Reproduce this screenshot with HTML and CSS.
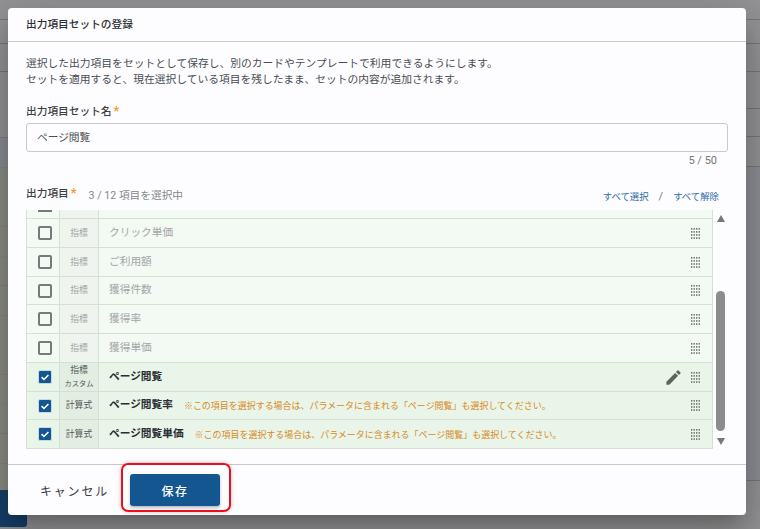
FILE: index.html
```html
<!DOCTYPE html>
<html lang="ja">
<head>
  <meta charset="UTF-8" />
  <meta name="viewport" content="width=device-width, initial-scale=1.0"/>
  <title>出力項目セットの登録</title>
  <link rel="stylesheet" href="styles.css">
</head>
<body>
  <div class="backdrop">
    <div class="bg-left"></div>
    <div class="bg-right"></div>
    <div class="bg-button"></div>
  </div>

  <div class="dialog">
    <div class="dialog-title">出力項目セットの登録</div>

    <div class="dialog-body">
      <p class="intro">選択した出力項目をセットとして保存し、別のカードやテンプレートで利用できるようにします。<br>セットを適用すると、現在選択している項目を残したまま、セットの内容が追加されます。</p>

      <label class="field-label">出力項目セット名<span class="req">*</span></label>
      <div class="text-input">ページ閲覧</div>
      <div class="counter">5 / 50</div>

      <div class="list-head">
        <label class="field-label">出力項目<span class="req">*</span></label>
        <span class="selected-count">3 / 12 項目を選択中</span>
        <span class="list-actions"><a>すべて選択</a><span class="slash">/</span><a>すべて解除</a></span>
      </div>

      <div class="list-wrap">
        <div class="list">
          <div class="row row-cut">
            <span class="check-cell"><span class="box"></span></span>
            <span class="type-cell"></span>
            <span class="name-cell"></span>
          </div>
          <div class="row">
            <span class="check-cell"><span class="box"></span></span>
            <span class="type-cell">指標</span>
            <span class="name-cell">クリック単価</span>
            <svg class="grip" viewBox="0 0 10 10" preserveAspectRatio="none"><use href="#dots"/></svg>
          </div>
          <div class="row">
            <span class="check-cell"><span class="box"></span></span>
            <span class="type-cell">指標</span>
            <span class="name-cell">ご利用額</span>
            <svg class="grip" viewBox="0 0 10 10" preserveAspectRatio="none"><use href="#dots"/></svg>
          </div>
          <div class="row short">
            <span class="check-cell"><span class="box"></span></span>
            <span class="type-cell">指標</span>
            <span class="name-cell">獲得件数</span>
            <svg class="grip" viewBox="0 0 10 10" preserveAspectRatio="none"><use href="#dots"/></svg>
          </div>
          <div class="row">
            <span class="check-cell"><span class="box"></span></span>
            <span class="type-cell">指標</span>
            <span class="name-cell">獲得率</span>
            <svg class="grip" viewBox="0 0 10 10" preserveAspectRatio="none"><use href="#dots"/></svg>
          </div>
          <div class="row">
            <span class="check-cell"><span class="box"></span></span>
            <span class="type-cell">指標</span>
            <span class="name-cell">獲得単価</span>
            <svg class="grip" viewBox="0 0 10 10" preserveAspectRatio="none"><use href="#dots"/></svg>
          </div>
          <div class="row on">
            <span class="check-cell"><span class="box"><svg viewBox="0 0 14 14"><path d="M3 7.2l2.8 2.7L11 4.6"/></svg></span></span>
            <span class="type-cell type-two">指標<small>カスタム</small></span>
            <span class="name-cell">ページ閲覧</span>
            <svg class="pencil" viewBox="0 0 24 24"><path d="M3 17.25V21h3.75L17.81 9.94l-3.75-3.75L3 17.25zM20.71 7.04a1 1 0 0 0 0-1.41l-2.34-2.34a1 1 0 0 0-1.41 0l-1.83 1.83 3.75 3.75 1.83-1.83z"/></svg>
            <svg class="grip" viewBox="0 0 10 10" preserveAspectRatio="none"><use href="#dots"/></svg>
          </div>
          <div class="row on short">
            <span class="check-cell"><span class="box"><svg viewBox="0 0 14 14"><path d="M3 7.2l2.8 2.7L11 4.6"/></svg></span></span>
            <span class="type-cell">計算式</span>
            <span class="name-cell">ページ閲覧率<em>※この項目を選択する場合は、パラメータに含まれる「ページ閲覧」も選択してください。</em></span>
            <svg class="grip" viewBox="0 0 10 10" preserveAspectRatio="none"><use href="#dots"/></svg>
          </div>
          <div class="row on">
            <span class="check-cell"><span class="box"><svg viewBox="0 0 14 14"><path d="M3 7.2l2.8 2.7L11 4.6"/></svg></span></span>
            <span class="type-cell">計算式</span>
            <span class="name-cell">ページ閲覧単価<em>※この項目を選択する場合は、パラメータに含まれる「ページ閲覧」も選択してください。</em></span>
            <svg class="grip" viewBox="0 0 10 10" preserveAspectRatio="none"><use href="#dots"/></svg>
          </div>
        </div>

        <div class="scrollbar">
          <span class="arrow-up"></span>
          <span class="track"><span class="thumb"></span></span>
          <span class="arrow-down"></span>
        </div>
      </div>
    </div>

    <div class="dialog-actions">
      <button class="btn-cancel">キャンセル</button>
      <span class="save-wrap">
        <button class="btn-save">保存</button>
        <span class="save-ring"></span>
      </span>
    </div>
  </div>

  <svg class="sprite" width="0" height="0">
    <defs>
      <g id="dots" fill="#6f736f">
        <rect x="0" y="0" width="1.5" height="1.5"/><rect x="2.8" y="0" width="1.5" height="1.5"/><rect x="5.6" y="0" width="1.5" height="1.5"/><rect x="8.4" y="0" width="1.5" height="1.5"/>
        <rect x="0" y="2.8" width="1.5" height="1.5"/><rect x="2.8" y="2.8" width="1.5" height="1.5"/><rect x="5.6" y="2.8" width="1.5" height="1.5"/><rect x="8.4" y="2.8" width="1.5" height="1.5"/>
        <rect x="0" y="5.6" width="1.5" height="1.5"/><rect x="2.8" y="5.6" width="1.5" height="1.5"/><rect x="5.6" y="5.6" width="1.5" height="1.5"/><rect x="8.4" y="5.6" width="1.5" height="1.5"/>
        <rect x="0" y="8.4" width="1.5" height="1.5"/><rect x="2.8" y="8.4" width="1.5" height="1.5"/><rect x="5.6" y="8.4" width="1.5" height="1.5"/><rect x="8.4" y="8.4" width="1.5" height="1.5"/>
      </g>
    </defs>
  </svg>
</body>
</html>
```

FILE: styles.css
```css
html, body {
  height: 100%;
}
body {
  font-family: Roboto, "Noto Sans CJK JP", sans-serif;
  margin: 0;
  background-color: #949496;
  overflow: hidden;
}
/* dimmed page behind the dialog, only the edges show */
.backdrop {
  position: absolute;
  inset: 0;
}
.bg-left,
.bg-right {
  position: absolute;
  top: 0;
  height: 100%;
}
.bg-left {
  left: 0;
  width: 40px;
  background:
    linear-gradient(#77777b 1px, transparent 1px) 0 19px / 100% 25px no-repeat,
    linear-gradient(#77777b 1px, transparent 1px) 0 43px / 100% 28px no-repeat,
    linear-gradient(#77777b 1px, transparent 1px) 0 71px / 100% 66px no-repeat,
    linear-gradient(#7d8088 1px, #8b8d96 1px) 0 137px / 100% 30px no-repeat,
    repeating-linear-gradient(#818479 0, #8b8e85 1px, #8b8e85 29.6px) 0 167px / 100% 323px no-repeat;
}
.bg-right {
  right: 0;
  width: 40px;
  background:
    linear-gradient(#77777b 1px, transparent 1px) 0 19px / 100% 25px no-repeat,
    linear-gradient(#77777b 1px, transparent 1px) 0 43px / 100% 28px no-repeat,
    linear-gradient(#77777b 1px, transparent 1px) 0 71px / 100% 37px no-repeat,
    linear-gradient(#77777b 1px, transparent 1px) 0 108px / 100% 28px no-repeat,
    linear-gradient(#77777b 1px, transparent 1px) 0 136px / 100% 30px no-repeat,
    linear-gradient(#77777b 1px, #8e8f96 1px) 0 166px / 100% 314px no-repeat,
    linear-gradient(#77777b 1px, transparent 1px) 0 480px / 100% 49px no-repeat;
}
.bg-button {
  position: absolute;
  left: 0;
  top: 490px;
  width: 27px;
  height: 37px;
  background-color: #17406a;
  border-radius: 0 3px 3px 0;
}
.sprite {
  position: absolute;
}
.dialog {
  position: relative;
  width: 738px;
  height: 507px;
  margin: 8px 0 0 8px;
  background-color: #fdfdff;
  border-radius: 4px;
  box-shadow: 0 11px 15px -7px rgba(0,0,0,0.2), 0 24px 38px 3px rgba(0,0,0,0.14), 0 9px 46px 8px rgba(0,0,0,0.12);
  display: flex;
  flex-direction: column;
  color: #212529;
}
.dialog-title {
  height: 33px;
  padding-left: 18px;
  font-size: 10.7px;
  font-weight: 500;
  line-height: 33px;
  border-bottom: 1px solid #c9c9cb;
  color: #2b2e33;
}
.dialog-body {
  flex: 1;
  padding: 14px 18px 0;
}
.intro {
  margin: 0;
  font-size: 10.77px;
  line-height: 16px;
  color: #4a4d52;
}
.field-label {
  display: block;
  margin-top: 15px;
  font-size: 10.7px;
  font-weight: 500;
  line-height: 18px;
  color: #3a3d42;
}
.req {
  color: #f59a23;
  margin-left: 2px;
  font-size: 13px;
  line-height: 10px;
}
.text-input {
  height: 27px;
  margin-top: 2px;
  padding-left: 10px;
  border: 1px solid #c9c9cb;
  border-radius: 3px;
  font-size: 10.7px;
  line-height: 27px;
  color: #4a4d52;
}
.counter {
  margin: 2px 11px 0 0;
  text-align: right;
  font-size: 11px;
  line-height: 14px;
  color: #75787c;
}
.list-head {
  display: flex;
  align-items: center;
  height: 18px;
  margin-top: 17px;
}
.list-head .field-label {
  margin-top: 0;
}
.selected-count {
  margin-left: 12px;
  font-size: 10.7px;
  color: #85888c;
}
.list-actions {
  margin-left: auto;
  margin-right: 9px;
  padding-top: 4px;
  font-size: 9.4px;
  color: #2f6ca8;
  display: flex;
  align-items: center;
}
.slash {
  margin: 0 10px;
  font-size: 11px;
  color: #75787c;
}
.list-wrap {
  display: flex;
  margin-top: 7px;
  height: 239px;
}
.list {
  width: 687px;
  height: 239px;
  overflow: hidden;
  border-left: 1px solid #d5e0d5;
  border-right: 1px solid #d5e0d5;
  box-sizing: border-box;
}
.row {
  display: flex;
  align-items: center;
  height: 29px;
  box-sizing: border-box;
  border-bottom: 1px solid #d5e0d5;
  background-color: #f3f9f3;
  color: #a3a6a8;
}
.row-cut {
  height: 9px;
}
.row-cut .check-cell {
  align-items: flex-start;
}
.row-cut .box {
  height: 2px;
  border-radius: 0;
  border-width: 0 0 2px;
}
.row.on {
  background-color: #e8f5e8;
  color: #2b2e33;
}
.row.short {
  height: 28px;
}
.check-cell {
  width: 33px;
  height: 100%;
  flex: none;
  display: flex;
  align-items: center;
  padding-left: 11px;
  box-sizing: border-box;
  border-right: 1px solid #d5e0d5;
}
.box {
  width: 14px;
  height: 14px;
  box-sizing: border-box;
  border: 2px solid #77797b;
  border-radius: 2px;
}
.on .box {
  border: 1px solid #c5d8e8;
  background-color: #14568f;
}
.box svg {
  display: block;
  width: 100%;
  height: 100%;
}
.box path {
  fill: none;
  stroke: #fff;
  stroke-width: 1.8;
}
.type-cell {
  width: 39px;
  height: 100%;
  flex: none;
  box-sizing: border-box;
  padding-bottom: 2px;
  display: flex;
  flex-direction: column;
  align-items: center;
  justify-content: center;
  background-color: #eff4ef;
  border-right: 1px solid #d5e0d5;
  font-size: 8.8px;
  color: #a3a6a8;
}
.on .type-cell {
  background-color: #e2eee2;
  color: #55585c;
}
.type-cell.type-two {
  padding-bottom: 0;
  line-height: 14px;
}
.type-two small {
  font-size: 7.25px;
}
.name-cell {
  flex: 1;
  padding: 0 0 4px 10px;
  font-size: 10.7px;
  white-space: nowrap;
}
.on .name-cell {
  font-weight: 700;
  padding-bottom: 3px;
}
.name-cell em {
  margin-left: 11px;
  vertical-align: -1px;
  font-style: normal;
  font-weight: 400;
  font-size: 8.98px;
  color: #d98a1f;
}
.grip {
  width: 9px;
  height: 11px;
  flex: none;
  margin: 0 12px 0 8px;
}
.pencil {
  width: 19px;
  height: 19px;
  flex: none;
  fill: #5f635f;
}
.scrollbar {
  width: 9px;
  margin-left: 3px;
  display: flex;
  flex-direction: column;
  align-items: center;
}
.arrow-up,
.arrow-down {
  width: 0;
  height: 0;
  flex: none;
  border-left: 4.5px solid transparent;
  border-right: 4.5px solid transparent;
}
.arrow-up {
  margin-top: 5px;
  border-bottom: 7px solid #77777a;
}
.arrow-down {
  margin: 7px 0 4px;
  border-top: 7px solid #77777a;
}
.track {
  flex: 1;
  width: 9px;
  display: flex;
  align-items: flex-end;
}
.thumb {
  width: 9px;
  height: 140px;
  border-radius: 5px;
  background-color: #8c8c8e;
}
.dialog-actions {
  height: 50px;
  border-top: 1px solid #c9c9cb;
  display: flex;
  align-items: center;
  padding-left: 18px;
}
.btn-cancel {
  width: 97px;
  height: 32px;
  margin-right: 7px;
  border: none;
  background: none;
  font-family: inherit;
  font-size: 12px;
  color: #3a3d42;
  padding: 0;
  letter-spacing: 1.8px;
}
.save-wrap {
  position: relative;
  display: flex;
}
.btn-save {
  width: 90px;
  height: 32px;
  border: none;
  border-radius: 3px;
  background-color: #14568f;
  color: #fff;
  font-family: inherit;
  font-size: 12px;
  font-weight: 500;
  letter-spacing: 1.4px;
  padding: 0;
  box-shadow: 0 2px 3px rgba(0,0,0,0.25);
}
/* red highlight drawn over the button */
.save-ring {
  position: absolute;
  left: -9px;
  top: -11px;
  width: 110px;
  height: 49px;
  box-sizing: border-box;
  border: 2px solid #e8101c;
  border-radius: 7px;
  box-shadow: 0 0 4px rgba(0,0,0,0.25);
}
```
